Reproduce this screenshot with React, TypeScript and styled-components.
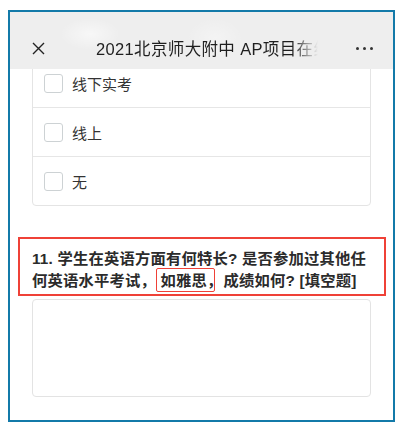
import React from "react";
import styled, { createGlobalStyle } from "styled-components";

const GlobalStyle = createGlobalStyle`
  html, body { margin: 0; padding: 0; background: #ffffff; }
  body { font-family: "Liberation Sans", "Noto Sans CJK SC", sans-serif; }
  * { box-sizing: border-box; }
`;

const Frame = styled.div`
  margin: 10px 0 0 8px;
  width: 387px;
  height: 412px;
  border: 2px solid #137aa9;
  display: flex;
  flex-direction: column;
  overflow: hidden;
  background: #ffffff;
`;

const Header = styled.div`
  height: 57px;
  flex-shrink: 0;
  padding-top: 15px;
  display: grid;
  grid-template-columns: 86px 222px 1fr;
  align-items: center;
  background:
    radial-gradient(ellipse 30px 16px at 80px 22px, rgba(255,255,255,0.55), rgba(255,255,255,0) 100%),
    radial-gradient(ellipse 28px 20px at 205px 26px, rgba(255,255,255,0.35), rgba(255,255,255,0) 100%),
    #eeeeee;
  position: relative;
  z-index: 1;
`;

const CloseBox = styled.div`
  padding-left: 22px;
  display: flex;
  align-items: center;
`;

const Title = styled.div`
  font-size: 16.5px;
  letter-spacing: 0.35px;
  color: #1f1f1f;
  white-space: nowrap;
  overflow: hidden;
  -webkit-mask-image: linear-gradient(to right, #000 0, #000 calc(100% - 26px), transparent 100%);
  mask-image: linear-gradient(to right, #000 0, #000 calc(100% - 26px), transparent 100%);
`;

const MoreBox = styled.div`
  justify-self: end;
  padding-right: 20px;
  display: flex;
  gap: 4px;
`;

const Dot = styled.span`
  width: 3px;
  height: 3px;
  border-radius: 50%;
  background: #333;
`;

const Scroll = styled.div`
  flex: 1;
  overflow: hidden;
  display: flex;
  flex-direction: column;
`;

const Card = styled.div`
  margin: -11px 22px 0;
  border: 1px solid #e4e4e4;
  border-radius: 4px;
  background: #fff;
`;

const Row = styled.div`
  height: 49px;
  display: flex;
  align-items: center;
  padding-left: 11px;
  border-bottom: 1px solid #e6e6e6;
  &:last-child {
    border-bottom: none;
    height: 48px;
  }
`;

const Check = styled.span`
  width: 19px;
  height: 19px;
  border: 1px solid #cdd2d4;
  border-radius: 3px;
  background: #fff;
  flex-shrink: 0;
`;

const OptionText = styled.span`
  margin-left: 9px;
  font-size: 15px;
  color: #333;
`;

const Question = styled.div`
  margin: 31px 7px 0 8px;
  border: 2px solid #ef4137;
  padding: 9px 6px 2px 12px;
  font-size: 15.3px;
  letter-spacing: 0.2px;
  line-height: 22px;
  font-weight: 700;
  color: #2b2b2b;
`;

const Mark = styled.span`
  position: relative;
  margin-right: 1px;
  &::after {
    content: "";
    position: absolute;
    left: -4px;
    right: 7px;
    top: -4px;
    bottom: -3px;
    border: 1.5px solid #ef4137;
    border-radius: 2px;
    pointer-events: none;
  }
`;

const Answer = styled.div`
  margin: 3px 22px 0;
  height: 98px;
  border: 1px solid #e3e3e3;
  border-radius: 4px;
  background: #fff;
`;

const options = ["线下实考", "线上", "无"];

export default function App() {
  return (
    <>
      <GlobalStyle />
      <Frame>
        <Header>
          <CloseBox>
            <svg width="13" height="13" viewBox="0 0 13 13">
              <path d="M1 1 L12 12 M12 1 L1 12" stroke="#222" strokeWidth="1.4" fill="none" />
            </svg>
          </CloseBox>
          <Title>2021北京师大附中 AP项目在线评估</Title>
          <MoreBox>
            <Dot />
            <Dot />
            <Dot />
          </MoreBox>
        </Header>
        <Scroll>
          <Card>
            {options.map((o) => (
              <Row key={o}>
                <Check />
                <OptionText>{o}</OptionText>
              </Row>
            ))}
          </Card>
          <Question>
            11. 学生在英语方面有何特长? 是否参加过其他任何英语水平考试， <Mark>如雅思，</Mark>成绩如何? [填空题]
          </Question>
          <Answer />
        </Scroll>
      </Frame>
    </>
  );
}
